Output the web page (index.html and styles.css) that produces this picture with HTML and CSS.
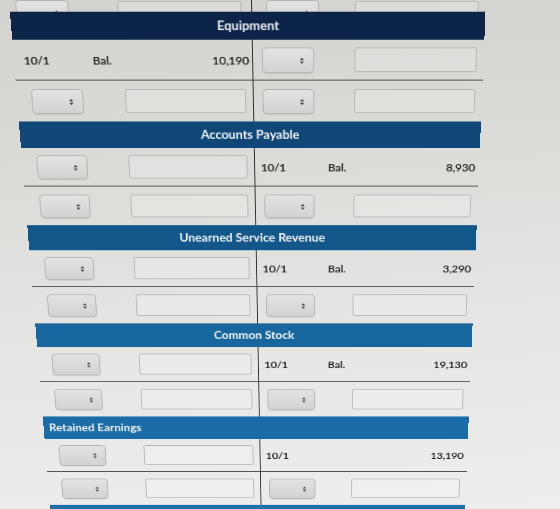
FILE: index.html
```html
<!DOCTYPE html>
<html lang="en">
<head>
    <meta charset="UTF-8">
    <meta name="viewport" content="width=device-width, initial-scale=1.0">
    <title>T-Accounts</title>
    <link rel="stylesheet" href="styles.css">
</head>
<body>
    <div class="ledger">
        <!-- last row of the account above, scrolled mostly out of view -->
        <div class="row row--tail">
            <div class="cell cell--debit cell--inputs">
                <span class="picker"><svg viewBox="0 0 6 10"><path d="M3 1 5.5 4h-5zM3 9 .5 6h5z"/></svg></span>
                <span class="field"></span>
            </div>
            <div class="cell cell--credit cell--inputs">
                <span class="picker"><svg viewBox="0 0 6 10"><path d="M3 1 5.5 4h-5zM3 9 .5 6h5z"/></svg></span>
                <span class="field"></span>
            </div>
        </div>

        <section class="account">
            <h2 class="account-head tone-1">Equipment</h2>
            <div class="row row--first">
                <div class="cell cell--debit entry">
                    <span class="entry-date">10/1</span>
                    <span class="entry-label">Bal.</span>
                    <span class="entry-amount">10,190</span>
                </div>
                <div class="cell cell--credit cell--inputs">
                    <span class="picker"><svg viewBox="0 0 6 10"><path d="M3 1 5.5 4h-5zM3 9 .5 6h5z"/></svg></span>
                    <span class="field"></span>
                </div>
            </div>
            <div class="row">
                <div class="cell cell--debit cell--inputs">
                    <span class="picker"><svg viewBox="0 0 6 10"><path d="M3 1 5.5 4h-5zM3 9 .5 6h5z"/></svg></span>
                    <span class="field"></span>
                </div>
                <div class="cell cell--credit cell--inputs">
                    <span class="picker"><svg viewBox="0 0 6 10"><path d="M3 1 5.5 4h-5zM3 9 .5 6h5z"/></svg></span>
                    <span class="field"></span>
                </div>
            </div>
        </section>

        <section class="account">
            <h2 class="account-head tone-2">Accounts Payable</h2>
            <div class="row row--first">
                <div class="cell cell--debit cell--inputs">
                    <span class="picker"><svg viewBox="0 0 6 10"><path d="M3 1 5.5 4h-5zM3 9 .5 6h5z"/></svg></span>
                    <span class="field"></span>
                </div>
                <div class="cell cell--credit entry">
                    <span class="entry-date">10/1</span>
                    <span class="entry-label">Bal.</span>
                    <span class="entry-amount">8,930</span>
                </div>
            </div>
            <div class="row">
                <div class="cell cell--debit cell--inputs">
                    <span class="picker"><svg viewBox="0 0 6 10"><path d="M3 1 5.5 4h-5zM3 9 .5 6h5z"/></svg></span>
                    <span class="field"></span>
                </div>
                <div class="cell cell--credit cell--inputs">
                    <span class="picker"><svg viewBox="0 0 6 10"><path d="M3 1 5.5 4h-5zM3 9 .5 6h5z"/></svg></span>
                    <span class="field"></span>
                </div>
            </div>
        </section>

        <section class="account">
            <h2 class="account-head tone-3">Unearned Service Revenue</h2>
            <div class="row row--first">
                <div class="cell cell--debit cell--inputs">
                    <span class="picker"><svg viewBox="0 0 6 10"><path d="M3 1 5.5 4h-5zM3 9 .5 6h5z"/></svg></span>
                    <span class="field"></span>
                </div>
                <div class="cell cell--credit entry">
                    <span class="entry-date">10/1</span>
                    <span class="entry-label">Bal.</span>
                    <span class="entry-amount">3,290</span>
                </div>
            </div>
            <div class="row">
                <div class="cell cell--debit cell--inputs">
                    <span class="picker"><svg viewBox="0 0 6 10"><path d="M3 1 5.5 4h-5zM3 9 .5 6h5z"/></svg></span>
                    <span class="field"></span>
                </div>
                <div class="cell cell--credit cell--inputs">
                    <span class="picker"><svg viewBox="0 0 6 10"><path d="M3 1 5.5 4h-5zM3 9 .5 6h5z"/></svg></span>
                    <span class="field"></span>
                </div>
            </div>
        </section>

        <section class="account">
            <h2 class="account-head tone-4">Common Stock</h2>
            <div class="row row--first">
                <div class="cell cell--debit cell--inputs">
                    <span class="picker"><svg viewBox="0 0 6 10"><path d="M3 1 5.5 4h-5zM3 9 .5 6h5z"/></svg></span>
                    <span class="field"></span>
                </div>
                <div class="cell cell--credit entry">
                    <span class="entry-date">10/1</span>
                    <span class="entry-label">Bal.</span>
                    <span class="entry-amount">19,130</span>
                </div>
            </div>
            <div class="row">
                <div class="cell cell--debit cell--inputs">
                    <span class="picker"><svg viewBox="0 0 6 10"><path d="M3 1 5.5 4h-5zM3 9 .5 6h5z"/></svg></span>
                    <span class="field"></span>
                </div>
                <div class="cell cell--credit cell--inputs">
                    <span class="picker"><svg viewBox="0 0 6 10"><path d="M3 1 5.5 4h-5zM3 9 .5 6h5z"/></svg></span>
                    <span class="field"></span>
                </div>
            </div>
        </section>

        <section class="account">
            <h2 class="account-head account-head--left tone-5">Retained Earnings</h2>
            <div class="row row--first">
                <div class="cell cell--debit cell--inputs">
                    <span class="picker"><svg viewBox="0 0 6 10"><path d="M3 1 5.5 4h-5zM3 9 .5 6h5z"/></svg></span>
                    <span class="field"></span>
                </div>
                <div class="cell cell--credit entry">
                    <span class="entry-date">10/1</span>
                    <span class="entry-label"></span>
                    <span class="entry-amount">13,190</span>
                </div>
            </div>
            <div class="row">
                <div class="cell cell--debit cell--inputs">
                    <span class="picker"><svg viewBox="0 0 6 10"><path d="M3 1 5.5 4h-5zM3 9 .5 6h5z"/></svg></span>
                    <span class="field"></span>
                </div>
                <div class="cell cell--credit cell--inputs">
                    <span class="picker"><svg viewBox="0 0 6 10"><path d="M3 1 5.5 4h-5zM3 9 .5 6h5z"/></svg></span>
                    <span class="field"></span>
                </div>
            </div>
        </section>

        <section class="account">
            <div class="account-head tone-6"></div>
        </section>
    </div>
</body>
</html>
```

FILE: styles.css
```css
html, body {
    height: 100%;
    overflow: hidden;
}
body {
    margin: 0;
    font-family: Lato, "Open Sans", sans-serif;
    color: #161616;
    background: linear-gradient(175deg, #d3d2ce 0%, #dcdcd9 35%, #e7e7e6 70%, #eeeeee 100%);
}

/* the sheet leans back a little, so lower accounts look smaller */
.ledger {
    width: 477px;
    margin-left: 9px;
    transform-origin: 316px 0;
    transform: perspective(800px) rotateX(-11.6deg);
}

.account-head {
    margin: 0;
    height: 29px;
    line-height: 29px;
    font-size: 13px;
    font-weight: 700;
    color: #eef1f5;
    text-align: center;
}
.account-head--left {
    text-align: left;
    padding-left: 6px;
}
.tone-1 { background-color: #0b2448; }
.tone-2 { background-color: #0f4777; }
.tone-3 { background-color: #13578a; }
.tone-4 { background-color: #17669d; }
.tone-5 { background-color: #1a6ca6; }
.tone-6 { background-color: #1c71ab; }

.row {
    display: grid;
    grid-template-columns: 243px 1fr;
    height: 44px;
}
.row--first {
    height: 43px;
    border-bottom: 1px solid #444;
    box-sizing: border-box;
}
.row--tail {
    height: 12px;
    overflow: hidden;
}

.cell {
    box-sizing: border-box;
    display: flex;
    align-items: center;
}
.cell--debit {
    border-right: 1px solid #2e2e2e;
    padding: 0 7px 0 15px;
}
.cell--credit {
    padding: 0 7px 0 9px;
}
.cell--inputs {
    justify-content: space-between;
}
.row--tail .cell {
    align-items: flex-end;
    padding-bottom: 7px;
}
.row--tail .cell--debit {
    padding-left: 6px;
    padding-right: 10px;
}
.row--tail .cell--credit {
    padding-left: 14px;
}

.picker {
    position: relative;
    width: 53px;
    height: 27px;
    box-sizing: border-box;
    border: 1px solid #b4b4b2;
    border-radius: 4px;
    background: linear-gradient(#e3e3e1, #d2d2d0);
    box-shadow: 0 1px 1px rgba(0, 0, 0, 0.08);
}
.picker svg {
    position: absolute;
    right: 9px;
    top: 9px;
    width: 5px;
    height: 8px;
    fill: #333;
}
.field {
    width: 124px;
    height: 26px;
    box-sizing: border-box;
    border: 1px solid #b7b7b5;
    border-radius: 2px;
    background: rgba(255, 255, 255, 0.18);
}

.entry {
    font-size: 12px;
    text-shadow: 0 0 0.5px rgba(0, 0, 0, 0.6);
}
.cell--debit.entry {
    padding: 0 3px 0 10px;
}
.cell--credit.entry {
    padding: 0 4px 0 6px;
}
.entry-date {
    width: 70px;
}
.entry-amount {
    margin-left: auto;
}
```
